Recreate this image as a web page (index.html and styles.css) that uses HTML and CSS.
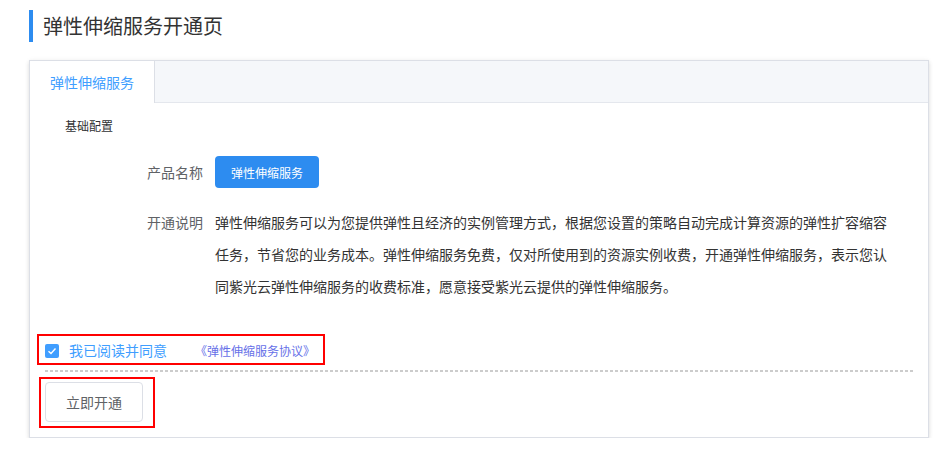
FILE: index.html
```
<!DOCTYPE html>
<html lang="zh-CN">
  <head>
    <meta charset="UTF-8" />
    <meta name="viewport" content="width=device-width, initial-scale=1.0" />
    <title>弹性伸缩服务开通页</title>
    <link rel="stylesheet" href="styles.css">
  </head>
  <body>
    <div class="page">
      <h2 class="title">弹性伸缩服务开通页</h2>

      <div class="card">
        <div class="tabs-header">
          <div class="tab active">弹性伸缩服务</div>
        </div>

        <div class="tab-content">
          <div class="section-title">基础配置</div>

          <div class="form-row">
            <label class="form-label">产品名称</label>
            <div class="form-value">
              <button class="btn-primary" type="button">弹性伸缩服务</button>
            </div>
          </div>

          <div class="form-row">
            <label class="form-label">开通说明</label>
            <p class="desc">弹性伸缩服务可以为您提供弹性且经济的实例管理方式，根据您设置的策略自动完成计算资源的弹性扩容缩容任务，节省您的业务成本。弹性伸缩服务免费，仅对所使用到的资源实例收费，开通弹性伸缩服务，表示您认同紫光云弹性伸缩服务的收费标准，愿意接受紫光云提供的弹性伸缩服务。</p>
          </div>
        </div>

        <div class="agree-box">
          <span class="checkbox">
            <svg width="10" height="8" viewBox="0 0 10 8">
              <path d="M1.5 4.2 L4 6.5 L8.5 1.5" fill="none" stroke="#fff" stroke-width="1.4" />
            </svg>
          </span>
          <span class="agree-text">我已阅读并同意</span>
          <a class="agree-link" href="#">《弹性伸缩服务协议》</a>
        </div>

        <div class="dotted-line"></div>

        <div class="submit-box">
          <button class="btn-default" type="button">立即开通</button>
        </div>
      </div>
    </div>
  </body>
</html>
```

FILE: styles.css
```
body {
  margin: 0;
  background: #fff;
  font-family: "Noto Sans CJK SC", "Noto Sans", sans-serif;
  color: #303133;
}
.page {
  padding: 10px 8px 0 29px;
}
.title {
  margin: 0;
  height: 32px;
  line-height: 32px;
  padding-left: 10px;
  border-left: 4px solid #2d8cf0;
  font-size: 20px;
  font-weight: normal;
  color: #333;
}
.card {
  width: 898px;
  margin-top: 18px;
  border: 1px solid #dcdfe6;
  background: #fff;
  box-shadow: 0 2px 4px rgba(0, 0, 0, 0.12), 0 0 6px rgba(0, 0, 0, 0.04);
}
.tabs-header {
  display: flex;
  height: 41px;
  background: #f5f7fa;
  border-bottom: 1px solid #e4e7ed;
}
.tab {
  height: 42px;
  line-height: 42px;
  padding: 0 20px;
  font-size: 14px;
  color: #409eff;
}
.tab.active {
  background: #fff;
  border-right: 1px solid #dcdfe6;
}
.tab-content {
  padding: 13px 0 0 35px;
}
.section-title {
  font-size: 12px;
  line-height: 20px;
  color: #303133;
  margin-bottom: 20px;
}
.form-row {
  display: flex;
  margin-left: 50px;
  margin-bottom: 18px;
}
.form-label {
  width: 88px;
  padding-right: 12px;
  text-align: right;
  font-size: 14px;
  line-height: 32px;
  color: #606266;
}
.btn-primary {
  height: 32px;
  padding: 0 16px;
  border: none;
  border-radius: 4px;
  background: #2d8cf0;
  color: #fff;
  font-family: inherit;
  font-size: 12px;
  cursor: pointer;
}
.desc {
  width: 680px;
  margin: 0;
  font-size: 14px;
  line-height: 32px;
  color: #333;
}
.agree-box {
  display: flex;
  align-items: center;
  box-sizing: border-box;
  width: max-content;
  height: 31px;
  margin: 32px 0 0 7px;
  padding: 2px 8px 0 6px;
  border: 2px solid #f00;
  white-space: nowrap;
}
.checkbox {
  display: inline-flex;
  align-items: center;
  justify-content: center;
  flex-shrink: 0;
  width: 14px;
  height: 14px;
  border-radius: 2px;
  background: #409eff;
  margin-right: 10px;
}
.agree-text {
  font-size: 14px;
  line-height: 19px;
  color: #409eff;
}
.agree-link {
  margin-left: 28px;
  font-size: 12px;
  line-height: 19px;
  color: #6670e8;
  text-decoration: none;
}
.dotted-line {
  height: 2px;
  margin: 5px 15px 0 15px;
  background-image: linear-gradient(to right, #ccc 3px, transparent 3px);
  background-size: 5px 2px;
}
.submit-box {
  display: inline-block;
  margin: 5px 0 9px 9px;
  padding: 3px 10px 4px 4px;
  border: 2px solid #f00;
}
.btn-default {
  display: block;
  width: 98px;
  height: 40px;
  border: 1px solid #dcdfe6;
  border-radius: 4px;
  background: #fff;
  color: #606266;
  font-family: inherit;
  font-size: 14px;
  cursor: pointer;
}
```
